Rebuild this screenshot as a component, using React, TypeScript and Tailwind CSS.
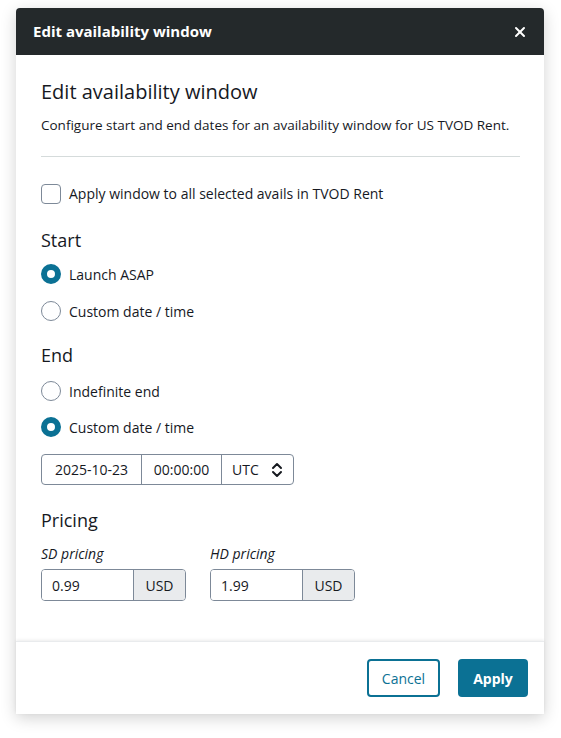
import { X } from 'lucide-react';

function Radio({ checked, label }: { checked?: boolean; label: string }) {
  return (
    <label className="flex items-center gap-2 h-[20px]">
      {checked ? (
        <span className="w-[20px] h-[20px] rounded-full border-[6px] border-[#0b7194] bg-white shrink-0" />
      ) : (
        <span className="w-[20px] h-[20px] rounded-full border border-[#7d8998] bg-white shrink-0" />
      )}
      <span className="text-[14px] text-[#16191f]">{label}</span>
    </label>
  );
}

function PriceInput({ label, value }: { label: string; value: string }) {
  return (
    <div className="flex flex-col">
      <span className="text-[14px] italic text-[#16191f] mb-[5px] leading-[20px]">{label}</span>
      <div className="flex h-[32px] w-[145px] border border-[#7d8998] rounded-[4px] overflow-hidden text-[14px] text-[#16191f]">
        <div className="flex-1 flex items-center px-[10px] bg-white">{value}</div>
        <div className="w-[52px] flex items-center justify-center bg-[#e9ebed] border-l border-[#7d8998]">USD</div>
      </div>
    </div>
  );
}

export default function App() {
  return (
    <div className="min-h-screen bg-white pt-[8px] pl-[16px]" style={{ fontFamily: '"Open Sans", "Noto Sans", sans-serif' }}>
      <div className="w-[528px] bg-white rounded-t-[4px] shadow-[0_4px_16px_rgba(0,0,0,0.18)] flex flex-col">
        {/* Header */}
        <div className="h-[47px] bg-[#24292b] rounded-t-[4px] flex items-center justify-between pl-[17px] pr-[16px]">
          <h1 className="text-white text-[15px] font-bold">Edit availability window</h1>
          <X size={16} strokeWidth={3} className="text-white" />
        </div>

        {/* Body */}
        <div className="px-[25px] pt-[25px] pb-[40px]">
          <h2 className="text-[20px] text-[#16191f] leading-[24px]">Edit availability window</h2>
          <p className="text-[13.5px] text-[#16191f] mt-[11px] leading-[20px]">
            Configure start and end dates for an availability window for US TVOD Rent.
          </p>
          <div className="h-px bg-[#d5dbdb] mt-[21px] mr-[-1px]" />

          <label className="flex items-center gap-2 mt-[26px]">
            <span className="w-[20px] h-[20px] rounded-[4px] border border-[#7d8998] bg-white shrink-0" />
            <span className="text-[14px] text-[#16191f]">Apply window to all selected avails in TVOD Rent</span>
          </label>

          <h3 className="text-[18px] text-[#16191f] mt-[24px] leading-[24px]">Start</h3>
          <div className="flex flex-col gap-[17px] mt-[12px]">
            <Radio checked label="Launch ASAP" />
            <Radio label="Custom date / time" />
          </div>

          <h3 className="text-[18px] text-[#16191f] mt-[22px] leading-[24px]">End</h3>
          <div className="flex flex-col gap-[16px] mt-[14px]">
            <Radio label="Indefinite end" />
            <Radio checked label="Custom date / time" />
          </div>

          <div className="flex w-[253px] h-[31px] mt-[17px] border border-[#7d8998] rounded-[4px] text-[14px] text-[#16191f]">
            <div className="w-[100px] flex items-center justify-center border-r border-[#7d8998]">2025-10-23</div>
            <div className="w-[80px] flex items-center justify-center border-r border-[#7d8998]">00:00:00</div>
            <div className="flex-1 flex items-center justify-between pl-[10px] pr-[10px]">
              <span>UTC</span>
              <svg width="12" height="18" viewBox="0 0 12 18" fill="none" stroke="#16191f" strokeWidth="2" strokeLinecap="round" strokeLinejoin="round">
                <path d="M2 7 L6 3 L10 7" />
                <path d="M2 11 L6 15 L10 11" />
              </svg>
            </div>
          </div>

          <h3 className="text-[18px] text-[#16191f] mt-[23px] leading-[24px]">Pricing</h3>
          <div className="flex gap-[24px] mt-[12px]">
            <PriceInput label="SD pricing" value="0.99" />
            <PriceInput label="HD pricing" value="1.99" />
          </div>
        </div>

        {/* Footer */}
        <div className="border-t border-[#e9ebed] shadow-[0_-1px_3px_rgba(0,0,0,0.08)] h-[73px] flex items-center justify-end gap-[18px] pr-[16px]">
          <button className="h-[38px] w-[73px] rounded-[4px] border-2 border-[#0b7194] text-[#0b7194] text-[14px] bg-white">
            Cancel
          </button>
          <button className="h-[38px] w-[70px] rounded-[4px] bg-[#0b7194] text-white text-[14px] font-bold">
            Apply
          </button>
        </div>
      </div>
    </div>
  );
}
